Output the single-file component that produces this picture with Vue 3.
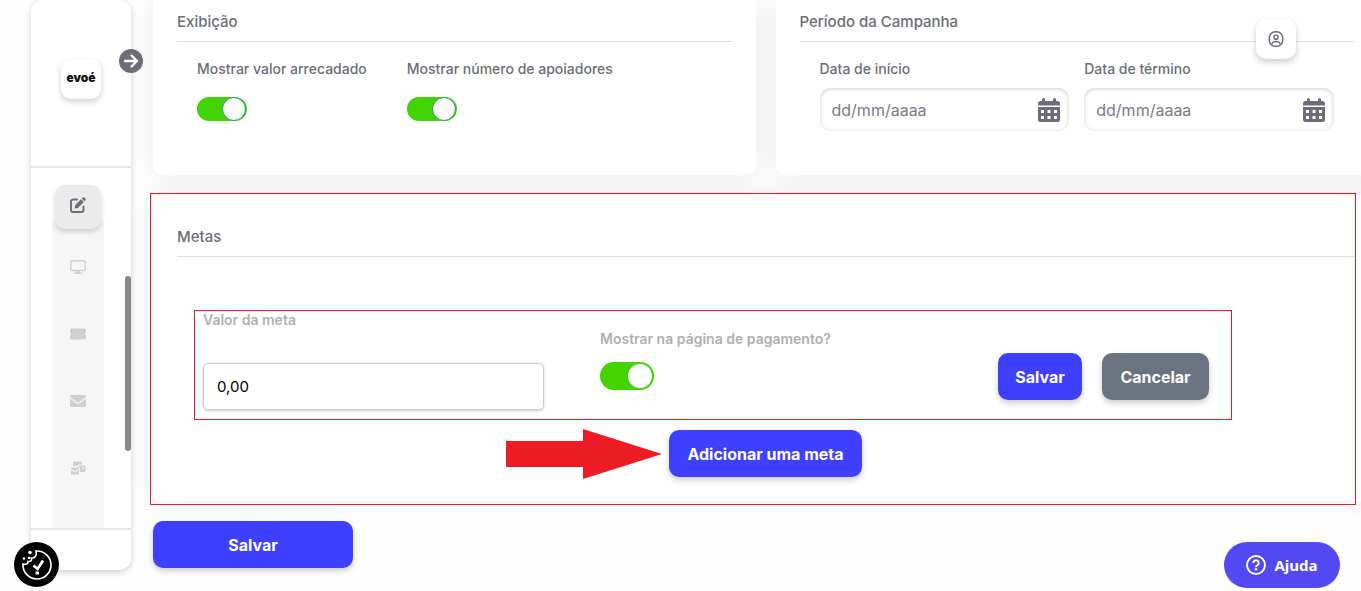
<script setup>
import { ref } from 'vue'

const showRaised = ref(true)
const showSupporters = ref(true)
const showOnPayment = ref(true)
const goalValue = ref('0,00')
const dates = ref([
  { id: 'inicio', label: 'Data de início', value: '' },
  { id: 'termino', label: 'Data de término', value: '' },
])
</script>

<template>
  <div class="page">
    <aside class="sidebar">
      <div class="brand">
        <a class="logo" href="#" aria-label="evoé">evoé</a>
      </div>
      <button class="expand" type="button" aria-label="Expandir menu">
        <svg viewBox="0 0 24 24" width="24" height="24">
          <circle cx="12" cy="12" r="12" fill="#6c6d78" />
          <path d="M6 12h12M12.500 6.500L18 12l-5.500 5.500" fill="none" stroke="#fff" stroke-width="2.400" stroke-linecap="round" stroke-linejoin="round" />
        </svg>
      </button>
      <nav class="nav">
        <a class="item active" href="#" aria-label="Editar">
          <svg viewBox="0 0 16 16" width="16" height="16">
            <path d="M7 2.500H3A2 2 0 0 0 1 4.500V13a2 2 0 0 0 2 2h8.500a2 2 0 0 0 2-2V9.500" fill="none" stroke="#6c6d78" stroke-width="1.900" stroke-linecap="round" />
            <path d="M11 2.200l2.800 2.800-5.900 5.900-3.300.6.700-3.400zM11.700 1.500l.8-.8a1.500 1.500 0 0 1 2.100 0l.7.7a1.500 1.500 0 0 1 0 2.100l-.8.8z" fill="#6c6d78" />
          </svg>
        </a>
        <a class="item" href="#" aria-label="Página">
          <svg viewBox="0 0 16 16" width="16" height="16">
            <rect x=".8" y="1.800" width="14.400" height="9.600" rx="1.200" fill="none" stroke="#d0d0d0" stroke-width="1.500" />
            <path d="M6.500 11.500h3l.4 2h1.600a.7.700 0 0 1 0 1.500h-7a.7.700 0 0 1 0-1.500h1.600z" fill="#d0d0d0" />
          </svg>
        </a>
        <a class="item" href="#" aria-label="Recompensas">
          <svg viewBox="0 0 16 16" width="16" height="16">
            <path d="M1.500 2.500h13A1.500 1.500 0 0 1 16 4v2.600a1.500 1.500 0 0 0 0 2.800V12a1.500 1.500 0 0 1-1.500 1.500h-13A1.500 1.500 0 0 1 0 12V9.400a1.500 1.500 0 0 0 0-2.800V4a1.500 1.500 0 0 1 1.500-1.500z" fill="#d0d0d0" />
          </svg>
        </a>
        <a class="item" href="#" aria-label="Mensagens">
          <svg viewBox="0 0 16 16" width="16" height="16">
            <path d="M1.500 2h13A1.500 1.500 0 0 1 16 3.500v.6L9.200 9.300a2 2 0 0 1-2.400 0L0 4.100v-.6A1.500 1.500 0 0 1 1.500 2z" fill="#d0d0d0" />
            <path d="M0 5.600l6.200 4.700a3 3 0 0 0 3.600 0L16 5.600v6.900a1.500 1.500 0 0 1-1.500 1.500h-13A1.500 1.500 0 0 1 0 12.500z" fill="#d0d0d0" />
          </svg>
        </a>
        <a class="item" href="#" aria-label="Envios">
          <svg viewBox="0 0 16 16" width="16" height="16">
            <path d="M3 6V2.500a1 1 0 0 1 1-1h7a1 1 0 0 1 1 1V4.500H8.500a1.500 1.500 0 0 0-1.500 1.500z" fill="#d0d0d0" />
            <path fill-rule="evenodd" d="M8.500 5.500h6a1 1 0 0 1 1 1V11a1 1 0 0 1-1 1H10V8.500A1.500 1.500 0 0 0 8.500 7zm4 1.500v2h1.500V7z" fill="#d0d0d0" />
            <path d="M1 7.500h8v1.200l-4 2.600L1 8.700zM1 10l4 2.600L9 10v4.500H1z" fill="#d0d0d0" />
          </svg>
        </a>
        <span class="thumb"></span>
      </nav>
      <div class="side-foot"></div>
    </aside>

    <main class="main">
      <div class="top-cards">
        <section class="card">
          <h2>Exibição</h2>
          <div class="fields toggles">
            <div class="field">
              <label for="arrecadado">Mostrar valor arrecadado</label>
              <input id="arrecadado" v-model="showRaised" class="switch" type="checkbox" />
            </div>
            <div class="field">
              <label for="apoiadores">Mostrar número de apoiadores</label>
              <input id="apoiadores" v-model="showSupporters" class="switch" type="checkbox" />
            </div>
          </div>
        </section>

        <section class="card">
          <h2>Período da Campanha</h2>
          <div class="fields dates">
            <div v-for="d in dates" :key="d.id" class="field">
              <label :for="d.id">{{ d.label }}</label>
              <div class="date-box">
                <input :id="d.id" v-model="d.value" type="text" placeholder="dd/mm/aaaa" />
                <button type="button" aria-label="Abrir calendário">
                  <svg viewBox="0 0 22 24" width="22" height="24">
                    <path d="M4 3V1.500a1.500 1.500 0 0 1 3 0V3h8V1.500a1.500 1.500 0 0 1 3 0V3h1.500A2.500 2.500 0 0 1 22 5.500V7.500H0v-2A2.500 2.500 0 0 1 2.500 3z" fill="#6c6d78" />
                    <path fill-rule="evenodd" d="M0 9h22v12.500a2.500 2.500 0 0 1-2.500 2.500h-17A2.500 2.500 0 0 1 0 21.500zM3 12v3h3v-3zm6.500 0v3h3v-3zm6.500 0v3h3v-3zM3 18v3h3v-3zm6.500 0v3h3v-3zm6.500 0v3h3v-3z" fill="#6c6d78" />
                  </svg>
                </button>
              </div>
            </div>
          </div>
        </section>
      </div>

      <section class="card goals">
        <h2>Metas</h2>
        <form class="goal" @submit.prevent>
          <div class="goal-value">
            <label for="valor">Valor da meta</label>
            <input id="valor" v-model="goalValue" type="text" />
          </div>
          <div class="goal-show">
            <label for="pagamento">Mostrar na página de pagamento?</label>
            <input id="pagamento" v-model="showOnPayment" class="switch large" type="checkbox" />
          </div>
          <div class="goal-actions">
            <button class="btn" type="submit">Salvar</button>
            <button class="btn grey" type="button">Cancelar</button>
          </div>
        </form>
        <div class="add-row">
          <svg class="arrow" viewBox="0 0 156 50" width="156" height="50">
            <path d="M0 12h77V0l79 25-79 25V38H0z" fill="#ed1c24" />
          </svg>
          <button class="btn add" type="button">Adicionar uma meta</button>
        </div>
      </section>

      <button class="btn save" type="button">Salvar</button>
    </main>

    <button class="profile" type="button" aria-label="Perfil">
      <svg viewBox="0 0 16 16" width="16" height="16" fill="none" stroke="#6c6d78">
        <rect x="1.300" y=".8" width="13.400" height="14.400" rx="6" stroke-width="1.500" />
        <circle cx="8" cy="6.200" r="2.100" stroke-width="1.400" />
        <path d="M3.800 13.500c.4-2.300 1.900-3 4.200-3s3.800.7 4.200 3" stroke-width="1.400" />
      </svg>
    </button>

    <button class="cookie" type="button" aria-label="Preferências de cookies">
      <svg viewBox="0 0 45 45" width="45" height="45" fill="none" stroke="#fff">
        <circle cx="22.500" cy="22.500" r="22.500" fill="#000" stroke="none" />
        <path d="M22 9a14 14 0 1 1-13 13c3 1 5-.2 5-2.500 3 .3 4-1 3.500-3.500 4 .5 5.500-3 4.500-7z" stroke-width="1.600" />
        <path d="M19.500 23.500l4 3.500 5.500-8.500" stroke-width="2.800" />
        <g fill="#fff" stroke="none">
          <path d="M21.500 29.500h3.500v3h-3.500z" />
          <circle cx="16" cy="10.500" r="1.800" />
          <circle cx="10" cy="16.500" r="1.300" />
          <circle cx="15" cy="16" r="1.300" />
        </g>
      </svg>
    </button>

    <button class="help" type="button">
      <svg viewBox="0 0 20 20" width="20" height="20" fill="none" stroke="#fff" stroke-width="1.900">
        <circle cx="10" cy="10" r="9" />
        <path d="M7.300 8a2.700 2.700 0 1 1 4.100 2.300c-1 .6-1.400 1-1.400 2" />
        <circle cx="10" cy="14.300" r="1.200" fill="#fff" stroke="none" />
      </svg>
      Ajuda
    </button>
  </div>
</template>

<style>
body {
  margin: 0;
  background: #fefefe;
}
</style>

<style scoped>
* {
  box-sizing: border-box;
}
.page {
  position: relative;
  display: flex;
  gap: 22px;
  min-height: 100vh;
  padding-left: 31px;
  overflow: hidden;
  font-family: Inter, "Liberation Sans", sans-serif;
  color: #6c6d78;
}
button,
input {
  font-family: inherit;
  margin: 0;
}
button {
  border: 0;
  padding: 0;
  background: none;
  cursor: pointer;
}
svg {
  display: block;
}

.sidebar {
  position: relative;
  display: flex;
  flex-direction: column;
  flex: none;
  width: 100px;
  height: calc(100vh - 21px);
  border-radius: 12px;
  background: #fff;
  box-shadow: 0 2px 6px rgba(0, 0, 0, 0.2);
}
.brand {
  display: flex;
  justify-content: center;
  height: 168px;
  padding-top: 59px;
  border-bottom: 2px solid #e4e4e4;
}
.logo {
  width: 40px;
  height: 40px;
  border-radius: 10px;
  background: #fff;
  box-shadow: 0 3px 6px rgba(0, 0, 0, 0.18);
  color: #111;
  font-size: 12px;
  font-weight: 900;
  line-height: 38px;
  text-align: center;
  text-decoration: none;
}
.expand {
  position: absolute;
  top: 49px;
  right: -12px;
}
.nav {
  position: relative;
  flex: 1;
  display: flex;
  flex-direction: column;
  align-items: center;
  width: 52px;
  margin-left: 21px;
  padding-top: 17px;
  background: linear-gradient(#fff 53px, #f6f6f6 53px);
}
.item {
  display: flex;
  align-items: center;
  justify-content: center;
  width: 46px;
  height: 67px;
}
.item.active {
  height: 44px;
  margin-bottom: 4px;
  padding-bottom: 4px;
  border-radius: 10px;
  background: #ebebeb;
  box-shadow: 0 3px 5px rgba(0, 0, 0, 0.16);
}
.thumb {
  position: absolute;
  top: 108px;
  right: -27px;
  width: 6px;
  height: 175px;
  border-radius: 3px;
  background: #888;
}
.side-foot {
  height: 42px;
  border-top: 2px solid #e4e4e4;
}

.main {
  flex: 1;
  min-width: 0;
  margin-right: -17px;
}
.top-cards {
  display: grid;
  grid-template-columns: repeat(2, minmax(0, 1fr));
  gap: 20px;
}
.card {
  padding: 0 24px;
  border-radius: 0 0 10px 10px;
  background: #fff;
  box-shadow: 0 0 30px rgba(0, 0, 0, 0.08);
}
.top-cards .card {
  height: 175px;
}
h2 {
  margin: 0;
  padding: 12px 0 9px;
  border-bottom: 1px solid #dedede;
  font-size: 15px;
  font-weight: 500;
  line-height: 20px;
}
label {
  font-size: 14px;
  font-weight: 500;
  line-height: 16px;
  white-space: nowrap;
}
.fields {
  padding: 19px 20px 0;
}
.field {
  display: flex;
  flex-direction: column;
  align-items: flex-start;
}
.toggles {
  display: flex;
  gap: 40px;
}
.toggles .field {
  gap: 20px;
}
.dates {
  display: grid;
  grid-template-columns: repeat(2, minmax(0, 1fr));
  gap: 15px;
}
.dates .field {
  gap: 11px;
}
.switch {
  appearance: none;
  display: flex;
  align-items: center;
  width: 50px;
  height: 24px;
  padding: 0 1px;
  border-radius: 14px;
  background: #c8c8c8;
}
.switch::before {
  content: "";
  width: 22px;
  height: 22px;
  border: 1px solid #16a34a;
  border-radius: 50%;
  background: #fafafa;
}
.switch:checked {
  justify-content: flex-end;
  background: #41d302;
}
.switch.large {
  width: 54px;
  height: 28px;
  padding: 0 2px;
}
.switch.large::before {
  width: 24px;
  height: 24px;
  border: 0;
  background: #fff;
}
.date-box {
  display: flex;
  align-items: center;
  width: 100%;
  height: 43px;
  padding: 0 9px 0 12px;
  border-radius: 10px;
  box-shadow: inset 0 1px 4px rgba(0, 0, 0, 0.2);
}
.date-box input {
  flex: 1;
  min-width: 0;
  padding: 0;
  border: 0;
  background: none;
  color: #6c6d78;
  font-size: 16px;
}
.date-box input::placeholder {
  color: #7a7b84;
}

.goals {
  position: relative;
  height: 306px;
  margin-top: 20px;
  padding-top: 20px;
  border-radius: 10px;
}
.goals::after {
  content: "";
  position: absolute;
  inset: -2px 22px -4px -3px;
  border: 1px solid #ed1c24;
  pointer-events: none;
}
.goal {
  display: grid;
  grid-template-columns: 341fr 342fr 211fr;
  gap: 56px;
  margin: 53px 122px 0 17px;
  padding: 1px 22px 9px 8px;
  border: 1px solid #ed1c24;
}
.goal label {
  color: #b0b0b0;
  font-weight: 600;
}
.goal-value {
  display: flex;
  flex-direction: column;
  gap: 35px;
}
.goal-value input {
  width: 100%;
  height: 47px;
  padding: 0 13px;
  border: 1px solid #ccc;
  border-radius: 5px;
  background: #fff;
  box-shadow: 0 1px 3px rgba(0, 0, 0, 0.2);
  color: #000;
  font-size: 15px;
}
.goal-show {
  display: flex;
  flex-direction: column;
  gap: 15px;
  padding-top: 19px;
}
.goal-actions {
  display: flex;
  gap: 20px;
  padding-top: 41px;
}
.btn {
  height: 47px;
  padding: 0 18px;
  border-radius: 10px;
  background: #3f3fff;
  box-shadow: 0 3px 6px rgba(0, 0, 0, 0.2);
  color: #fff;
  font-size: 16px;
  font-weight: 700;
  white-space: nowrap;
}
.goal-actions .btn {
  flex: 84 1 0;
  padding: 0;
}
.goal-actions .grey {
  flex-grow: 107;
  background: #6c7380;
}
.add-row {
  position: relative;
  display: flex;
  justify-content: center;
  margin-top: 10px;
}
.add {
  min-width: 193px;
}
.arrow {
  position: absolute;
  top: -1px;
  right: calc(50% + 104px);
}
.save {
  width: 200px;
  margin-top: 20px;
}

.profile {
  position: absolute;
  top: 19px;
  right: 65px;
  display: flex;
  align-items: center;
  justify-content: center;
  width: 40px;
  height: 40px;
  border-radius: 10px;
  background: #fff;
  box-shadow: 0 3px 6px rgba(0, 0, 0, 0.22);
}
.cookie {
  position: absolute;
  left: 14px;
  bottom: 4px;
}
.help {
  position: absolute;
  right: 21px;
  bottom: 3px;
  display: flex;
  align-items: center;
  justify-content: center;
  gap: 8px;
  width: 116px;
  height: 46px;
  border-radius: 23px;
  background: #5249f2;
  color: #fff;
  font-family: "Noto Sans", sans-serif;
  font-size: 15px;
  font-weight: 700;
}
</style>
